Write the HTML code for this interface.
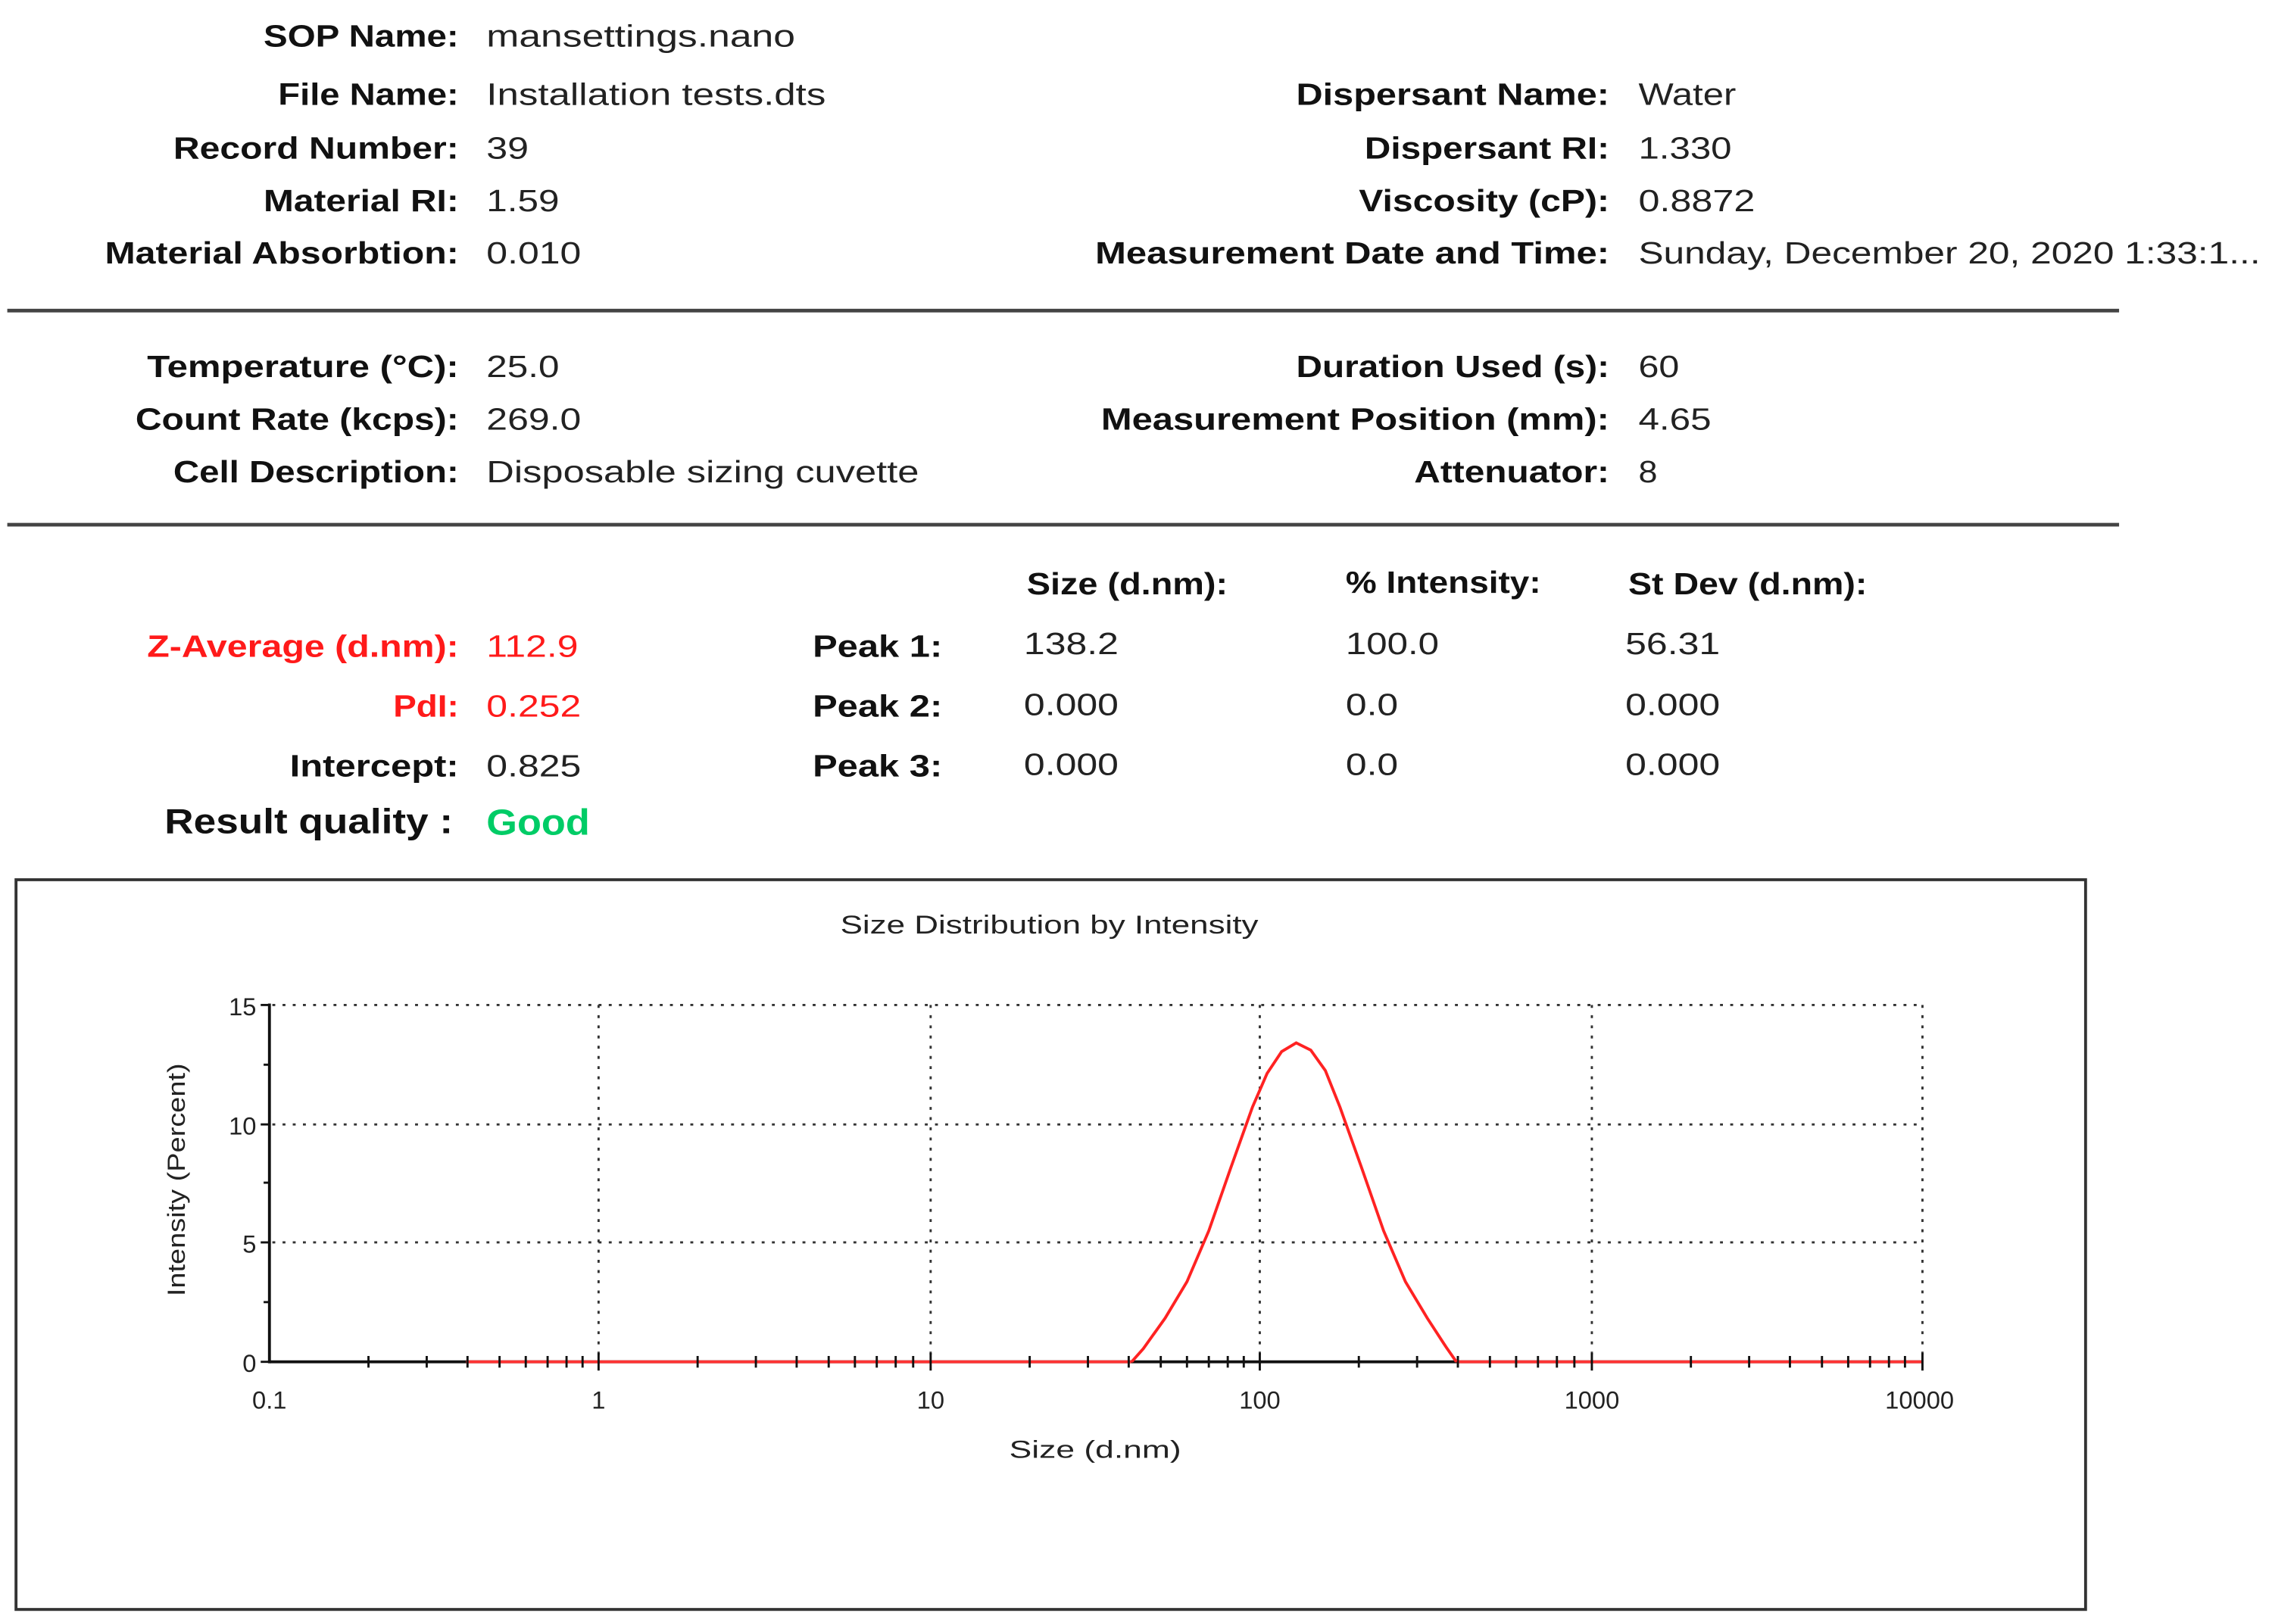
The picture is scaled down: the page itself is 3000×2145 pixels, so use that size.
<!DOCTYPE html>
<html><head><meta charset="utf-8"><style>
html,body{margin:0;padding:0;background:#fff;width:3000px;height:2145px;overflow:hidden}
svg{display:block}
text{font-family:"Liberation Sans",Arial,sans-serif}
.b{font-weight:bold;font-size:21px;fill:#111}
.v{font-size:21px;fill:#222}
.r{fill:#ff1a1a}
</style></head><body>
<svg width="3000" height="2145" viewBox="0 0 1560 1115" preserveAspectRatio="none" xmlns="http://www.w3.org/2000/svg">
<rect width="1560" height="1115" fill="#fff"/>
<g text-anchor="end" class="b">
<text x="315" y="32" class="b" textLength="134" lengthAdjust="spacingAndGlyphs">SOP Name:</text>
<text x="315" y="72" class="b" textLength="124" lengthAdjust="spacingAndGlyphs">File Name:</text>
<text x="315" y="109" class="b" textLength="196" lengthAdjust="spacingAndGlyphs">Record Number:</text>
<text x="315" y="145" class="b" textLength="134" lengthAdjust="spacingAndGlyphs">Material RI:</text>
<text x="315" y="181" class="b" textLength="243" lengthAdjust="spacingAndGlyphs">Material Absorbtion:</text>
<text x="315" y="259" class="b" textLength="214" lengthAdjust="spacingAndGlyphs">Temperature (°C):</text>
<text x="315" y="295" class="b" textLength="222" lengthAdjust="spacingAndGlyphs">Count Rate (kcps):</text>
<text x="315" y="331" class="b" textLength="196" lengthAdjust="spacingAndGlyphs">Cell Description:</text>
<text x="315" y="451" class="b r" textLength="214" lengthAdjust="spacingAndGlyphs">Z-Average (d.nm):</text>
<text x="315" y="492" class="b r" textLength="45" lengthAdjust="spacingAndGlyphs">PdI:</text>
<text x="315" y="533" class="b" textLength="116" lengthAdjust="spacingAndGlyphs">Intercept:</text>
<text x="1105" y="72" class="b" textLength="215" lengthAdjust="spacingAndGlyphs">Dispersant Name:</text>
<text x="1105" y="109" class="b" textLength="168" lengthAdjust="spacingAndGlyphs">Dispersant RI:</text>
<text x="1105" y="145" class="b" textLength="172" lengthAdjust="spacingAndGlyphs">Viscosity (cP):</text>
<text x="1105" y="181" class="b" textLength="353" lengthAdjust="spacingAndGlyphs">Measurement Date and Time:</text>
<text x="1105" y="259" class="b" textLength="215" lengthAdjust="spacingAndGlyphs">Duration Used (s):</text>
<text x="1105" y="295" class="b" textLength="349" lengthAdjust="spacingAndGlyphs">Measurement Position (mm):</text>
<text x="1105" y="331" class="b" textLength="134" lengthAdjust="spacingAndGlyphs">Attenuator:</text>
</g>
<text x="113" y="572" style="font-weight:bold;font-size:24px;fill:#111" textLength="198" lengthAdjust="spacingAndGlyphs">Result quality :</text>
<text x="334" y="573" style="font-weight:bold;font-size:25px;fill:#00cc66" textLength="71" lengthAdjust="spacingAndGlyphs">Good</text>
<g class="v">
<text x="334" y="32" class="v" textLength="212" lengthAdjust="spacingAndGlyphs">mansettings.nano</text>
<text x="334" y="72" class="v" textLength="233" lengthAdjust="spacingAndGlyphs">Installation tests.dts</text>
<text x="334" y="109" class="v" textLength="29" lengthAdjust="spacingAndGlyphs">39</text>
<text x="334" y="145" class="v" textLength="50" lengthAdjust="spacingAndGlyphs">1.59</text>
<text x="334" y="181" class="v" textLength="65" lengthAdjust="spacingAndGlyphs">0.010</text>
<text x="334" y="259" class="v" textLength="50" lengthAdjust="spacingAndGlyphs">25.0</text>
<text x="334" y="295" class="v" textLength="65" lengthAdjust="spacingAndGlyphs">269.0</text>
<text x="334" y="331" class="v" textLength="297" lengthAdjust="spacingAndGlyphs">Disposable sizing cuvette</text>
<text x="334" y="451" class="v r" textLength="63" lengthAdjust="spacingAndGlyphs">112.9</text>
<text x="334" y="492" class="v r" textLength="65" lengthAdjust="spacingAndGlyphs">0.252</text>
<text x="334" y="533" class="v" textLength="65" lengthAdjust="spacingAndGlyphs">0.825</text>
<text x="1125" y="72" class="v" textLength="67" lengthAdjust="spacingAndGlyphs">Water</text>
<text x="1125" y="109" class="v" textLength="64" lengthAdjust="spacingAndGlyphs">1.330</text>
<text x="1125" y="145" class="v" textLength="80" lengthAdjust="spacingAndGlyphs">0.8872</text>
<text x="1125" y="181" class="v" textLength="427" lengthAdjust="spacingAndGlyphs">Sunday, December 20, 2020 1:33:1...</text>
<text x="1125" y="259" class="v" textLength="28" lengthAdjust="spacingAndGlyphs">60</text>
<text x="1125" y="295" class="v" textLength="50" lengthAdjust="spacingAndGlyphs">4.65</text>
<text x="1125" y="331" class="v" textLength="13" lengthAdjust="spacingAndGlyphs">8</text>
</g>
<rect x="5" y="212" width="1450" height="2.5" fill="#444"/>
<rect x="5" y="359" width="1450" height="2.5" fill="#444"/>
<text x="705" y="408" class="b" textLength="138" lengthAdjust="spacingAndGlyphs">Size (d.nm):</text>
<text x="924" y="407" class="b" textLength="134" lengthAdjust="spacingAndGlyphs">% Intensity:</text>
<text x="1118" y="408" class="b" textLength="164" lengthAdjust="spacingAndGlyphs">St Dev (d.nm):</text>
<text x="558" y="451" class="b" textLength="89" lengthAdjust="spacingAndGlyphs">Peak 1:</text>
<text x="558" y="492" class="b" textLength="89" lengthAdjust="spacingAndGlyphs">Peak 2:</text>
<text x="558" y="533" class="b" textLength="89" lengthAdjust="spacingAndGlyphs">Peak 3:</text>
<text x="703" y="449" class="v" textLength="65" lengthAdjust="spacingAndGlyphs">138.2</text>
<text x="703" y="491" class="v" textLength="65" lengthAdjust="spacingAndGlyphs">0.000</text>
<text x="703" y="532" class="v" textLength="65" lengthAdjust="spacingAndGlyphs">0.000</text>
<text x="924" y="449" class="v" textLength="64" lengthAdjust="spacingAndGlyphs">100.0</text>
<text x="924" y="491" class="v" textLength="36" lengthAdjust="spacingAndGlyphs">0.0</text>
<text x="924" y="532" class="v" textLength="36" lengthAdjust="spacingAndGlyphs">0.0</text>
<text x="1116" y="449" class="v" textLength="65" lengthAdjust="spacingAndGlyphs">56.31</text>
<text x="1116" y="491" class="v" textLength="65" lengthAdjust="spacingAndGlyphs">0.000</text>
<text x="1116" y="532" class="v" textLength="65" lengthAdjust="spacingAndGlyphs">0.000</text>

<!-- chart -->
<rect x="11" y="604" width="1421" height="501" fill="none" stroke="#333" stroke-width="2"/>
<text x="577" y="641" style="font-size:18px;fill:#222" textLength="287" lengthAdjust="spacingAndGlyphs">Size Distribution by Intensity</text>
<g stroke="#333" stroke-width="1.5" stroke-dasharray="2,5" fill="none">
<line x1="187" y1="690" x2="1320" y2="690"/>
<line x1="187" y1="772" x2="1320" y2="772"/>
<line x1="187" y1="853" x2="1320" y2="853"/>
<line x1="411" y1="690" x2="411" y2="935"/>
<line x1="639" y1="690" x2="639" y2="935"/>
<line x1="865" y1="690" x2="865" y2="935"/>
<line x1="1093" y1="690" x2="1093" y2="935"/>
<line x1="1320" y1="690" x2="1320" y2="935"/>
</g>
<line x1="185" y1="689" x2="185" y2="936" stroke="#111" stroke-width="2"/>
<line x1="185" y1="935" x2="1320" y2="935" stroke="#111" stroke-width="2"/>
<line x1="320" y1="935" x2="777" y2="935" stroke="#f33" stroke-width="2"/>
<line x1="1000" y1="935" x2="1320" y2="935" stroke="#f33" stroke-width="2"/>
<g stroke="#111" stroke-width="1.5">
<line x1="179" y1="690" x2="185" y2="690"/><line x1="181" y1="731" x2="185" y2="731"/>
<line x1="179" y1="772" x2="185" y2="772"/><line x1="181" y1="812" x2="185" y2="812"/>
<line x1="179" y1="853" x2="185" y2="853"/><line x1="181" y1="894" x2="185" y2="894"/>
<line x1="179" y1="935" x2="185" y2="935"/>
<path d="M253 931v8M293 931v8M321 931v8M343 931v8M361 931v8M376 931v8M389 931v8M400 931v8M411 929v12
M479 931v8M519 931v8M547 931v8M569 931v8M587 931v8M602 931v8M615 931v8M627 931v8M639 929v12
M707 931v8M747 931v8M775 931v8M797 931v8M815 931v8M830 931v8M843 931v8M854 931v8M865 929v12
M933 931v8M973 931v8M1001 931v8M1023 931v8M1041 931v8M1056 931v8M1069 931v8M1081 931v8M1093 929v12
M1161 931v8M1201 931v8M1229 931v8M1251 931v8M1269 931v8M1284 931v8M1297 931v8M1308 931v8M1320 929v12"/>
</g>
<polyline fill="none" stroke="#f22" stroke-width="2" points="777,935 785,926 800,905 815,880 830,845 845,802 860,760 870,737 880,722 890,716 900,721 910,735 920,760 935,802 950,845 965,880 980,905 993,925 1000,935"/>
<g style="font-size:17px;fill:#222">
<text x="176" y="697" text-anchor="end">15</text>
<text x="176" y="779" text-anchor="end">10</text>
<text x="176" y="860" text-anchor="end">5</text>
<text x="176" y="942" text-anchor="end">0</text>
<text x="185" y="967" text-anchor="middle">0.1</text>
<text x="411" y="967" text-anchor="middle">1</text>
<text x="639" y="967" text-anchor="middle">10</text>
<text x="865" y="967" text-anchor="middle">100</text>
<text x="1093" y="967" text-anchor="middle">1000</text>
<text x="1318" y="967" text-anchor="middle">10000</text>
<text x="752" y="1001" text-anchor="middle" textLength="118" lengthAdjust="spacingAndGlyphs">Size (d.nm)</text>
<text transform="translate(127,810) rotate(-90)" text-anchor="middle" textLength="160" lengthAdjust="spacingAndGlyphs">Intensity (Percent)</text>
</g>
</svg>
</body></html>
